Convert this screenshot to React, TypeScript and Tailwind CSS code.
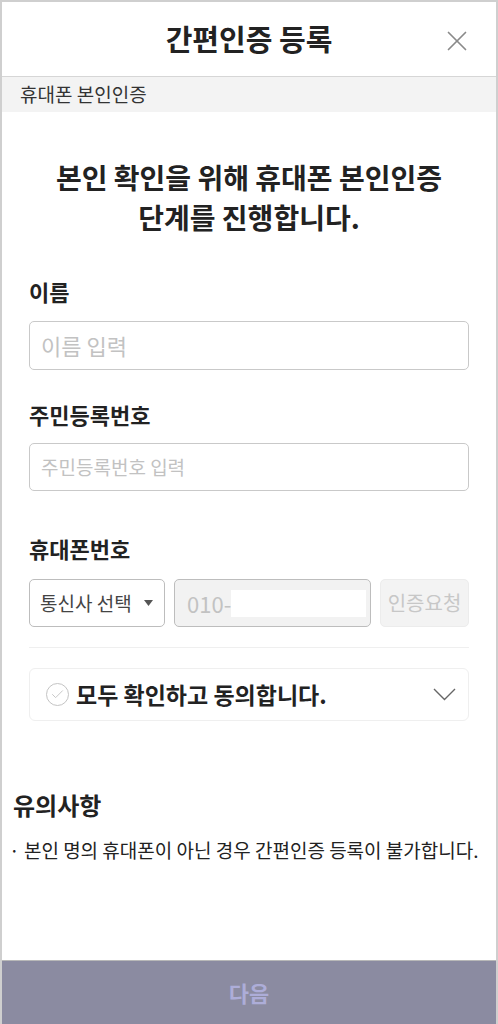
import { X, Check } from 'lucide-react';

const font = { fontFamily: '"Noto Sans CJK KR", "Noto Sans", sans-serif' };

function Label({ children }: { children: string }) {
  return <div className="text-[22px] font-bold text-[#222] leading-[26px]">{children}</div>;
}

export default function App() {
  return (
    <div
      className="flex flex-col h-[1024px] w-[498px] bg-white border-x-2 border-t-2 border-[#cfcfcf] text-[#222] overflow-hidden"
      style={font}
    >
      <header className="relative flex items-center justify-center h-[75px] shrink-0 border-b border-[#d6d6d6]">
        <h1 className="text-[29px] font-bold text-[#222]">간편인증 등록</h1>
        <button className="absolute right-[22px] top-[22px] text-[#8a8a8a]">
          <X size={34} strokeWidth={1.2} />
        </button>
      </header>

      <div className="h-[35px] shrink-0 bg-[#f3f3f3] flex items-center px-[18px] text-[19px] text-[#333]">
        휴대폰 본인인증
      </div>

      <main className="flex-1 flex flex-col">
        <h2 className="mt-[45px] text-center text-[28px] font-bold leading-[40px] text-[#222]">
          본인 확인을 위해 휴대폰 본인인증
          <br />
          단계를 진행합니다.
        </h2>

        <div className="px-[27px] mt-[41px] flex flex-col">
          <Label>이름</Label>
          <div className="mt-[17px] h-[49px] rounded-[5px] border border-[#c9c9c9] flex items-center px-[11px] text-[22px] text-[#c2c2c2]">
            이름 입력
          </div>

          <div className="mt-[31px]">
            <Label>주민등록번호</Label>
          </div>
          <div className="mt-[16px] h-[48px] rounded-[5px] border border-[#c9c9c9] flex items-center px-[11px] text-[19px] text-[#c2c2c2]">
            주민등록번호 입력
          </div>

          <div className="mt-[44px]">
            <Label>휴대폰번호</Label>
          </div>
          <div className="mt-[18px] flex gap-[9px] h-[48px]">
            <div className="w-[136px] rounded-[5px] border border-[#bdbdbd] flex items-center justify-between pl-[10px] pr-[11px] text-[19px] text-[#444]">
              <span>통신사 선택</span>
              <svg width="9" height="6" viewBox="0 0 9 6">
                <path d="M0 0 H9 L4.5 6 Z" fill="#555" />
              </svg>
            </div>
            <div className="flex-1 rounded-[5px] border border-[#bdbdbd] bg-[#f2f2f2] flex items-center pl-[12px] pr-[4px] text-[22px] text-[#c2c2c2]">
              <span>010-</span>
              <span className="flex-1 h-[27px] bg-white" />
            </div>
            <div className="w-[89px] rounded-[5px] border border-[#ececec] bg-[#f3f3f3] flex items-center justify-center text-[20px] text-[#c7c7c7]">
              인증요청
            </div>
          </div>

          <div className="mt-[20px] h-px bg-[#efefef]" />

          <div className="mt-[20px] h-[53px] rounded-[6px] border border-[#efefef] flex items-center pl-[16px] pr-[11px]">
            <span className="w-[23px] h-[23px] rounded-full border border-[#c4c4c4] flex items-center justify-center text-[#c8c8c8]">
              <Check size={15} strokeWidth={1.6} />
            </span>
            <span className="ml-[7px] flex-1 text-[23px] font-bold text-[#222]">모두 확인하고 동의합니다.</span>
            <svg width="23" height="13" viewBox="0 0 23 13" className="mr-[1px]">
              <polyline points="1,1 11.5,11.5 22,1" fill="none" stroke="#666" strokeWidth="1.4" />
            </svg>
          </div>
        </div>

        <div className="mt-[69px] px-[11px]">
          <div className="text-[24px] font-bold text-[#222] leading-[30px]">유의사항</div>
          <div className="mt-[17px] text-[19px] text-[#222] leading-[26px] -ml-[4px] whitespace-nowrap">
            · 본인 명의 휴대폰이 아닌 경우 간편인증 등록이 불가합니다.
          </div>
        </div>
      </main>

      <button className="h-[64px] shrink-0 bg-[#8b8ba1] border-t border-[#b8b8b8] flex items-center justify-center text-[22px] font-bold text-[#adadd8]">
        다음
      </button>
    </div>
  );
}
